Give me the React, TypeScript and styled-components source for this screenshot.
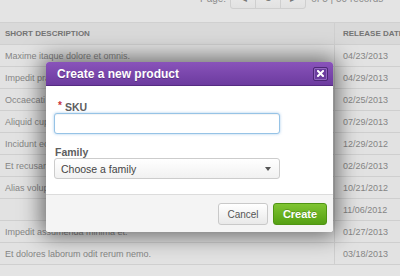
import styled, { createGlobalStyle } from 'styled-components'

const GlobalStyle = createGlobalStyle`
  html, body {
    margin: 0;
    padding: 0;
    background: #e4e4e4;
    overflow: hidden;
    font-family: "Liberation Sans", Arial, sans-serif;
  }
`

const Page = styled.div`
  position: relative;
  width: 400px;
  height: 276px;
  overflow: hidden;
`

const Toolbar = styled.div`
  display: flex;
  align-items: center;
  height: 22px;
  margin-top: -13px;
  margin-bottom: 13px;
  padding-left: 200px;
  font-size: 10px;
  color: #8c8c8c;
`

const Pager = styled.div`
  display: flex;
  height: 22px;
  margin: 0 5px 0 4px;
  border: 1px solid #cfcfcf;
  border-radius: 3px;
  background: linear-gradient(#ededed, #e2e2e2);
  box-sizing: border-box;
`

const PagerBtn = styled.span`
  width: 24px;
  display: flex;
  align-items: center;
  justify-content: center;
  font-size: 9px;
  color: #777;
  & + & {
    border-left: 1px solid #cfcfcf;
  }
`

const Table = styled.div`
  width: 440px;
  border-top: 1px solid #d0d0d0;
`

const Row = styled.div<{ $head?: boolean }>`
  display: grid;
  grid-template-columns: 334px 1fr;
  height: 21px;
  border-bottom: 1px solid #cfcfcf;
  background: ${p => (p.$head ? '#d9d9d9' : '#e2e2e2')};
  font-size: ${p => (p.$head ? '8px' : '9px')};
  font-weight: ${p => (p.$head ? 'bold' : 'normal')};
  color: ${p => (p.$head ? '#747474' : '#858585')};
`

const Cell = styled.div`
  display: flex;
  align-items: center;
  padding-left: 5px;
  white-space: nowrap;
  overflow: hidden;
  & + & {
    border-left: 1px solid #cfcfcf;
    padding-left: 8px;
  }
`

const Modal = styled.div`
  position: absolute;
  left: 46px;
  top: 62px;
  width: 287px;
  height: 170px;
  display: flex;
  flex-direction: column;
  background: #fff;
  border-radius: 3px;
  box-shadow: 0 0 22px 4px rgba(0, 0, 0, 0.55);
  overflow: hidden;
`

const ModalHeader = styled.div`
  display: flex;
  align-items: center;
  justify-content: space-between;
  height: 24px;
  padding: 0 5px 0 11px;
  background: linear-gradient(#8953ba, #6c3b9f);
  border-bottom: 1px solid #552b82;
  box-sizing: border-box;
`

const Title = styled.div`
  font-size: 12px;
  font-weight: bold;
  color: #fff;
  text-shadow: 0 1px 0 rgba(0, 0, 0, 0.25);
`

const CloseButton = styled.div`
  width: 15px;
  height: 14px;
  display: flex;
  align-items: center;
  justify-content: center;
  background: #6b3c9e;
  border: 1px solid #4d2776;
  box-shadow: inset 0 0 0 1px #9066bd;
  border-radius: 2px;
  box-sizing: border-box;
`

const ModalBody = styled.div`
  flex: 1;
  padding: 14px 8px 0;
`

const Label = styled.div<{ $gap?: boolean }>`
  display: flex;
  align-items: center;
  height: 14px;
  margin: ${p => (p.$gap ? '11px 0 0' : '0')};
  padding-left: 1px;
  font-size: 10.5px;
  font-weight: bold;
  color: #5e5e5e;
`

const Required = styled.span`
  color: #c8323a;
  font-size: 10px;
  margin: -2px 3px 0 3px;
  line-height: 8px;
`

const Input = styled.div`
  width: 226px;
  height: 21px;
  margin-top: -1px;
  border: 1px solid #96c3e6;
  border-radius: 3px;
  box-shadow: 0 0 3px rgba(110, 170, 225, 0.6), inset 0 1px 1px rgba(0, 0, 0, 0.05);
  box-sizing: border-box;
  background: #fff;
`

const Select = styled.div`
  display: flex;
  align-items: center;
  justify-content: space-between;
  width: 226px;
  height: 21px;
  margin-top: -1px;
  padding: 0 8px 0 6px;
  border: 1px solid #cccccc;
  border-radius: 3px;
  background: linear-gradient(#ffffff, #f1f1f1);
  box-sizing: border-box;
  font-size: 10.5px;
  color: #444;
`

const Caret = styled.span`
  width: 0;
  height: 0;
  border-left: 3.5px solid transparent;
  border-right: 3.5px solid transparent;
  border-top: 4px solid #555;
`

const Footer = styled.div`
  display: flex;
  justify-content: flex-end;
  gap: 5px;
  height: 38px;
  padding: 8px 6px 0 0;
  background: #f4f4f4;
  border-top: 1px solid #dcdcdc;
  box-sizing: border-box;
`

const Button = styled.div<{ $primary?: boolean }>`
  display: flex;
  align-items: center;
  justify-content: center;
  width: ${p => (p.$primary ? '54px' : '50px')};
  height: 22px;
  border-radius: 3px;
  box-sizing: border-box;
  font-size: ${p => (p.$primary ? '11px' : '10px')};
  font-weight: ${p => (p.$primary ? 'bold' : 'normal')};
  color: ${p => (p.$primary ? '#fff' : '#555')};
  background: ${p => (p.$primary ? 'linear-gradient(#7fc431, #55a013)' : 'linear-gradient(#ffffff, #e9e9e9)')};
  border: 1px solid ${p => (p.$primary ? '#4f9413' : '#c9c9c9')};
  text-shadow: ${p => (p.$primary ? '0 -1px 0 rgba(0,0,0,0.2)' : 'none')};
`

const rows = [
  ['Maxime itaque dolore et omnis.', '04/23/2013'],
  ['Impedit praesentium quia ut.', '04/29/2013'],
  ['Occaecati  et voluptas sunt.', '02/25/2013'],
  ['Aliquid cupiditate est natus.', '07/29/2013'],
  ['Incidunt eos quasi ipsum.', '12/29/2012'],
  ['Et recusandae nihil et.', '02/26/2013'],
  ['Alias voluptatem qui sed.', '10/21/2012'],
  ['', '11/06/2012'],
  ['Impedit assumenda minima et.', '01/27/2013'],
  ['Et dolores laborum odit rerum nemo.', '03/18/2013'],
]

const App: React.FC = () => {
  return (
    <Page>
      <GlobalStyle />
      <Toolbar>
        Page:
        <Pager>
          <PagerBtn>◀</PagerBtn>
          <PagerBtn>1</PagerBtn>
          <PagerBtn>▶</PagerBtn>
        </Pager>
        of 5 | 50 records
      </Toolbar>
      <Table>
        <Row $head>
          <Cell>SHORT DESCRIPTION</Cell>
          <Cell>RELEASE DATE</Cell>
        </Row>
        {rows.map(([desc, date], i) => (
          <Row key={date + i}>
            <Cell>{desc}</Cell>
            <Cell>{date}</Cell>
          </Row>
        ))}
      </Table>
      <Modal>
        <ModalHeader>
          <Title>Create a new product</Title>
          <CloseButton>
            <svg width="7" height="7" viewBox="0 0 7 7">
              <path d="M1 1 L6 6 M6 1 L1 6" stroke="#fff" strokeWidth="2" strokeLinecap="square" />
            </svg>
          </CloseButton>
        </ModalHeader>
        <ModalBody>
          <Label><Required>*</Required>SKU</Label>
          <Input />
          <Label $gap>Family</Label>
          <Select>
            Choose a family
            <Caret />
          </Select>
        </ModalBody>
        <Footer>
          <Button>Cancel</Button>
          <Button $primary>Create</Button>
        </Footer>
      </Modal>
    </Page>
  )
}

export default App
